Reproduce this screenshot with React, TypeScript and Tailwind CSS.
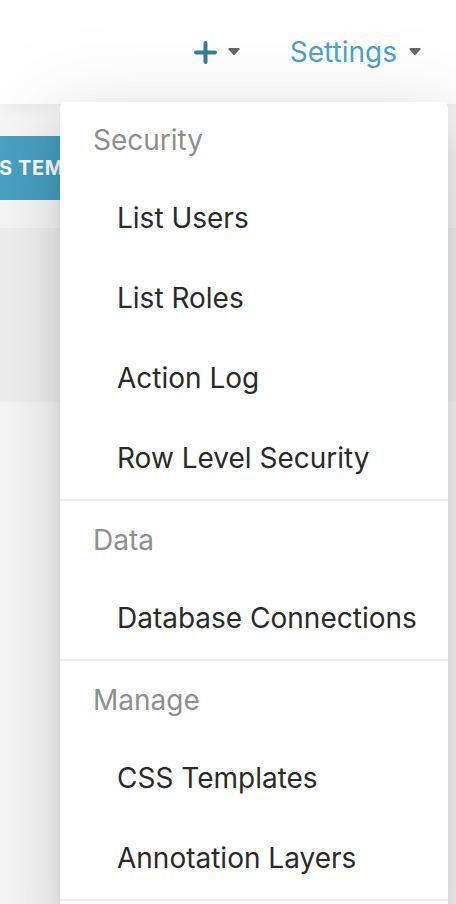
import React from "react";

const font = { fontFamily: "Inter, 'Noto Sans', sans-serif" };

function Caret() {
  return (
    <svg width="12" height="8" viewBox="0 0 12 8" className="block">
      <path d="M0.5 1.2 Q0 0 1.4 0 H10.6 Q12 0 11.5 1.2 L6.8 6.8 Q6 7.6 5.2 6.8 Z" fill="#666666" />
    </svg>
  );
}

function Group({ title, items }: { title: string; items: string[] }) {
  return (
    <div>
      <div className="h-[76px] flex items-center pl-[33px] text-[28px] text-[#8f8f8f]">{title}</div>
      {items.map((it) => (
        <div key={it} className="h-[80px] flex items-center pl-[57px] text-[28px] text-[#2a2a2a]">
          {it}
        </div>
      ))}
      <div className="py-[1px]">
        <div className="h-[2px] bg-[#ececec]" />
      </div>
    </div>
  );
}

export default function App() {
  return (
    <div className="relative w-[456px] h-[904px] overflow-hidden bg-[#f7f7f7]" style={font}>
      <header className="relative z-10 h-[104px] bg-white shadow-[0_4px_16px_rgba(0,0,0,0.05)] flex items-center justify-end pr-[35px]">
        <div className="flex items-center gap-[11px] mr-[50px]">
          <svg width="23" height="23" viewBox="0 0 23 23" className="block">
            <path d="M11.5 2 V21 M2 11.5 H21" stroke="#357f99" strokeWidth="4" strokeLinecap="round" />
          </svg>
          <Caret />
        </div>
        <div className="flex items-center gap-[12px]">
          <span className="text-[28px] text-[#4aa4c6] leading-none">Settings</span>
          <Caret />
        </div>
      </header>
      <div className="flex flex-col">
        <div className="h-[32px]" />
        <div className="h-[64px] flex">
          <div className="ml-[-30px] h-full w-[320px] bg-gradient-to-r from-[#4aa3c4] to-[#3f97b8] flex items-center text-white text-[20px] font-bold tracking-[0.6px]">
            CSS TEMPLATE
          </div>
        </div>
        <div className="h-[28px]" />
        <div className="h-[174px] bg-[#f0f0f0]" />
        <div className="flex-1 bg-[#fafafa] h-[520px]" />
      </div>
      <div className="absolute left-[60px] top-[102px] w-[388px] h-[830px] bg-white rounded-t-[6px] z-20 shadow-[0_12px_32px_-16px_rgba(0,0,0,0.16),0_18px_56px_0_rgba(0,0,0,0.1),0_24px_96px_32px_rgba(0,0,0,0.06)]">
        <Group title="Security" items={["List Users", "List Roles", "Action Log", "Row Level Security"]} />
        <Group title="Data" items={["Database Connections"]} />
        <Group title="Manage" items={["CSS Templates", "Annotation Layers"]} />
      </div>
    </div>
  );
}
